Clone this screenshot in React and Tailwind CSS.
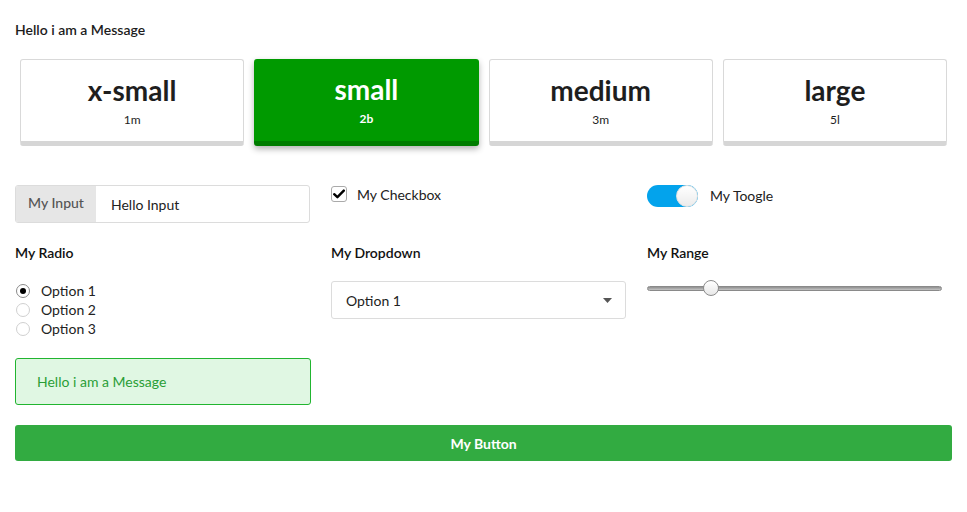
import React from "react";

const tiles = [
  { title: "x-small", sub: "1m" },
  { title: "small", sub: "2b", active: true },
  { title: "medium", sub: "3m" },
  { title: "large", sub: "5l" },
];

function Radio({ checked, label }) {
  return (
    <div className="flex items-center h-[19px]">
      <span
        className={`w-[14px] h-[14px] rounded-full border flex items-center justify-center bg-white ml-[1px] ${
          checked ? "border-[#8a8a8a]" : "border-[#d0d0d0]"
        }`}
      >
        {checked && <span className="w-[6px] h-[6px] rounded-full bg-black"></span>}
      </span>
      <span className="ml-[11px] text-[14px] text-[#222]">{label}</span>
    </div>
  );
}

export default function App() {
  return (
    <div className="w-[967px] h-[512px] bg-white px-[15px] pt-[21px] font-['Lato','Open_Sans',sans-serif] text-[#222]">
      <div className="text-[14px] font-semibold leading-[18px] text-[#1c1c1c]">Hello i am a Message</div>

      {/* Size tiles */}
      <div className="grid grid-cols-4 mt-[20px] w-[937px]">
        {tiles.map((t) => (
          <div key={t.title} className="px-[5px]">
            <div
              className={`h-[87px] rounded-[3px] flex flex-col items-center pt-[13px] ${
                t.active
                  ? "bg-[#009a00] border-b-[5px] border-[#007d00] text-white shadow-[0_3px_6px_rgba(0,0,0,0.3)]"
                  : "bg-white border border-[#d9d9d9] border-b-[5px] border-b-[#d6d6d6] text-[#1e1e1e]"
              }`}
            >
              <div className="text-[28px] font-bold leading-[34px]">{t.title}</div>
              <div className={`text-[12px] leading-[16px] mt-[5px] ${t.active ? "font-bold" : ""}`}>{t.sub}</div>
            </div>
          </div>
        ))}
      </div>

      {/* Controls */}
      <div className="grid grid-cols-[295px_295px_295px] gap-x-[21px] mt-[39px]">
        <div className="flex h-[38px] border border-[#dcdcdc] rounded-[3px] overflow-hidden">
          <div className="w-[80px] bg-[#e6e6e6] flex items-center justify-center text-[14px] font-medium text-[#555] pb-[3px]">My Input</div>
          <div className="flex-1 flex items-center pl-[15px] text-[14px] text-[#222]">Hello Input</div>
        </div>

        <div className="flex items-start pt-[1px]">
          <span className="w-[16px] h-[16px] rounded-[3px] border border-[#aaa] bg-white flex items-center justify-center">
            <svg width="12" height="10" viewBox="0 0 12 10">
              <path d="M1.2 5.2 L4.4 8.2 L10.8 1.6" fill="none" stroke="#000" strokeWidth="2.4" strokeLinecap="round" strokeLinejoin="round" />
            </svg>
          </span>
          <span className="ml-[10px] text-[14px] leading-[18px] text-[#222]">My Checkbox</span>
        </div>

        <div className="flex items-start">
          <div className="w-[51px] h-[22px] rounded-full bg-[#03a3ec] relative">
            <span className="absolute right-0 top-0 w-[22px] h-[22px] rounded-full bg-gradient-to-b from-white to-[#ececec] border border-[#e2e2e2]"></span>
          </div>
          <span className="ml-[12px] text-[14px] leading-[22px] text-[#222]">My Toogle</span>
        </div>

        <div className="mt-[21px] text-[14px] font-semibold leading-[18px] text-[#111]">My Radio</div>
        <div className="mt-[21px] text-[14px] font-semibold leading-[18px] text-[#111]">My Dropdown</div>
        <div className="mt-[21px] text-[14px] font-semibold leading-[18px] text-[#111]">My Range</div>

        <div className="mt-[19px] flex flex-col">
          <Radio checked label="Option 1" />
          <Radio label="Option 2" />
          <Radio label="Option 3" />
        </div>

        <div className="mt-[19px]">
          <div className="h-[38px] border border-[#dcdcdc] rounded-[3px] flex items-center justify-between pl-[14px] pr-[13px]">
            <span className="text-[14px] text-[#222]">Option 1</span>
            <svg width="9" height="5" viewBox="0 0 9 5">
              <path d="M0 0 H9 L4.5 5 Z" fill="#555" />
            </svg>
          </div>
        </div>

        <div className="mt-[18px]">
          <div className="relative h-[16px] flex items-center">
            <div className="w-full h-[5px] rounded-full bg-gradient-to-b from-[#8f8f8f] to-[#c4c4c4] border border-[#8a8a8a]"></div>
            <span className="absolute left-[56px] top-0 w-[16px] h-[16px] rounded-full border border-[#8c8c8c] bg-gradient-to-b from-white to-[#e8e8e8]"></span>
          </div>
        </div>
      </div>

      {/* Message */}
      <div className="w-[296px] h-[47px] mt-[20px] rounded-[3px] border border-[#21b530] bg-[#e0f7e3] flex items-center pl-[21px] text-[14px] text-[#2a9e36]">
        Hello i am a Message
      </div>

      {/* Button */}
      <button className="w-[937px] h-[36px] mt-[20px] rounded-[3px] bg-[#32ab41] text-white text-[14px] font-bold flex items-center justify-center">
        My Button
      </button>
    </div>
  );
}
